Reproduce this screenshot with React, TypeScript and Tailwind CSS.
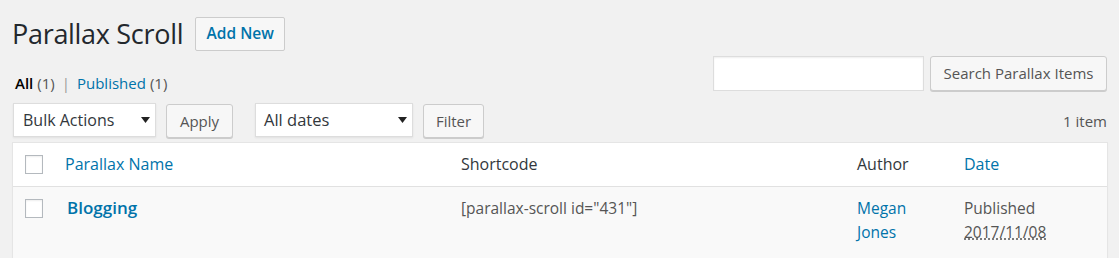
import React from "react";

const font = { fontFamily: '"Open Sans", "Noto Sans", Arial, sans-serif' };

function Caret() {
  return (
    <svg width="9" height="6" viewBox="0 0 9 6" className="shrink-0">
      <path d="M0 0 L9 0 L4.5 6 Z" fill="#222" />
    </svg>
  );
}

function Checkbox() {
  return <div className="w-[18px] h-[19px] border border-[#b4b9be] bg-white shadow-[inset_0_1px_2px_rgba(0,0,0,0.07)]" />;
}

export default function App() {
  return (
    <div style={font} className="w-[1119px] h-[258px] overflow-hidden bg-[#f1f1f1] text-[#444] text-[13px]">
      <div className="pl-[12px] pr-[12px]">
        {/* Title */}
        <div className="flex items-center pt-[17px] h-[51px]">
          <h1 className="text-[27px] leading-[34px] text-[#23282d] font-normal tracking-[-0.3px]">Parallax Scroll</h1>
          <div className="ml-[12px] h-[34px] w-[90px] flex items-center justify-center border border-[#ccc] bg-[#f7f7f7] rounded-[2px] text-[#0073aa] text-[15.5px] font-semibold">
            Add New
          </div>
        </div>

        {/* Subsubsub + search */}
        <div className="flex justify-between">
          <div className="pt-[22px] pl-[3px] text-[15px] leading-[20px] flex items-center gap-[4px]">
            <span className="text-black font-semibold">All</span>
            <span className="text-[#555]">(1)</span>
            <span className="text-[#999] mx-[3px]">|</span>
            <span className="text-[#0073aa]">Published</span>
            <span className="text-[#555]">(1)</span>
          </div>
          <div className="flex pt-[5px]">
            <div className="w-[211px] h-[35px] bg-white border border-[#ddd] shadow-[inset_0_1px_2px_rgba(0,0,0,0.07)]" />
            <div className="ml-[6px] w-[177px] h-[35px] flex items-center justify-center border border-[#ccc] bg-[#f7f7f7] rounded-[3px] shadow-[0_1px_0_#ccc] text-[#555] text-[15px]">
              Search Parallax Items
            </div>
          </div>
        </div>

        {/* Tablenav */}
        <div className="flex items-start justify-between pt-[10px]">
          <div className="flex items-start">
            <div className="ml-[1px] w-[143px] h-[34px] bg-white border border-[#ddd] flex items-center justify-between pl-[9px] pr-[5px] text-[16px] text-[#32373c] shadow-[0_1px_2px_rgba(0,0,0,0.07)]">
              <span>Bulk Actions</span>
              <Caret />
            </div>
            <div className="ml-[10px] w-[67px] h-[34px] mt-[1px] flex items-center justify-center border border-[#ccc] bg-[#f7f7f7] rounded-[3px] shadow-[0_1px_0_#ccc] text-[#555] text-[15px]">
              Apply
            </div>
            <div className="ml-[22px] w-[158px] h-[34px] bg-white border border-[#ddd] flex items-center justify-between pl-[8px] pr-[5px] text-[16.5px] text-[#32373c] shadow-[0_1px_2px_rgba(0,0,0,0.07)]">
              <span>All dates</span>
              <Caret />
            </div>
            <div className="ml-[10px] w-[61px] h-[34px] mt-[1px] flex items-center justify-center border border-[#ccc] bg-[#f7f7f7] rounded-[3px] shadow-[0_1px_0_#ccc] text-[#555] text-[15px]">
              Filter
            </div>
          </div>
          <div className="text-[15px] text-[#555] leading-[20px] pt-[8px]">1 item</div>
        </div>

        {/* Table */}
        <div className="mt-[4px] w-[1096px] border border-[#e5e5e5] bg-white shadow-[0_1px_1px_rgba(0,0,0,0.04)]">
          <div className="grid grid-cols-[42px_396px_396px_107px_1fr] h-[44px] items-center border-b border-[#e1e1e1] text-[16px] pb-[1px]">
            <div className="pl-[12px]"><Checkbox /></div>
            <div className="pl-[10px] text-[#0073aa]">Parallax Name</div>
            <div className="pl-[10px] text-[#32373c]">Shortcode</div>
            <div className="pl-[10px] text-[#32373c]">Author</div>
            <div className="pl-[10px] text-[#0073aa]">Date</div>
          </div>
          <div className="grid grid-cols-[42px_396px_396px_107px_1fr] bg-[#f9f9f9] h-[80px] items-start pt-[9px]">
            <div className="pl-[12px] pt-[3px]"><Checkbox /></div>
            <div className="pl-[12px] text-[17px] font-semibold text-[#0073aa] leading-[24px]">Blogging</div>
            <div className="pl-[10px] text-[15.5px] text-[#555] leading-[24px]">[parallax-scroll id="431"]</div>
            <div className="pl-[10px] text-[15.5px] text-[#0073aa] leading-[24px]">Megan<br />Jones</div>
            <div className="pl-[10px] text-[15.5px] text-[#555] leading-[24px]">
              Published<br />
              <span className="underline decoration-dotted decoration-[#555]">2017/11/08</span>
            </div>
          </div>
        </div>
      </div>
    </div>
  );
}
